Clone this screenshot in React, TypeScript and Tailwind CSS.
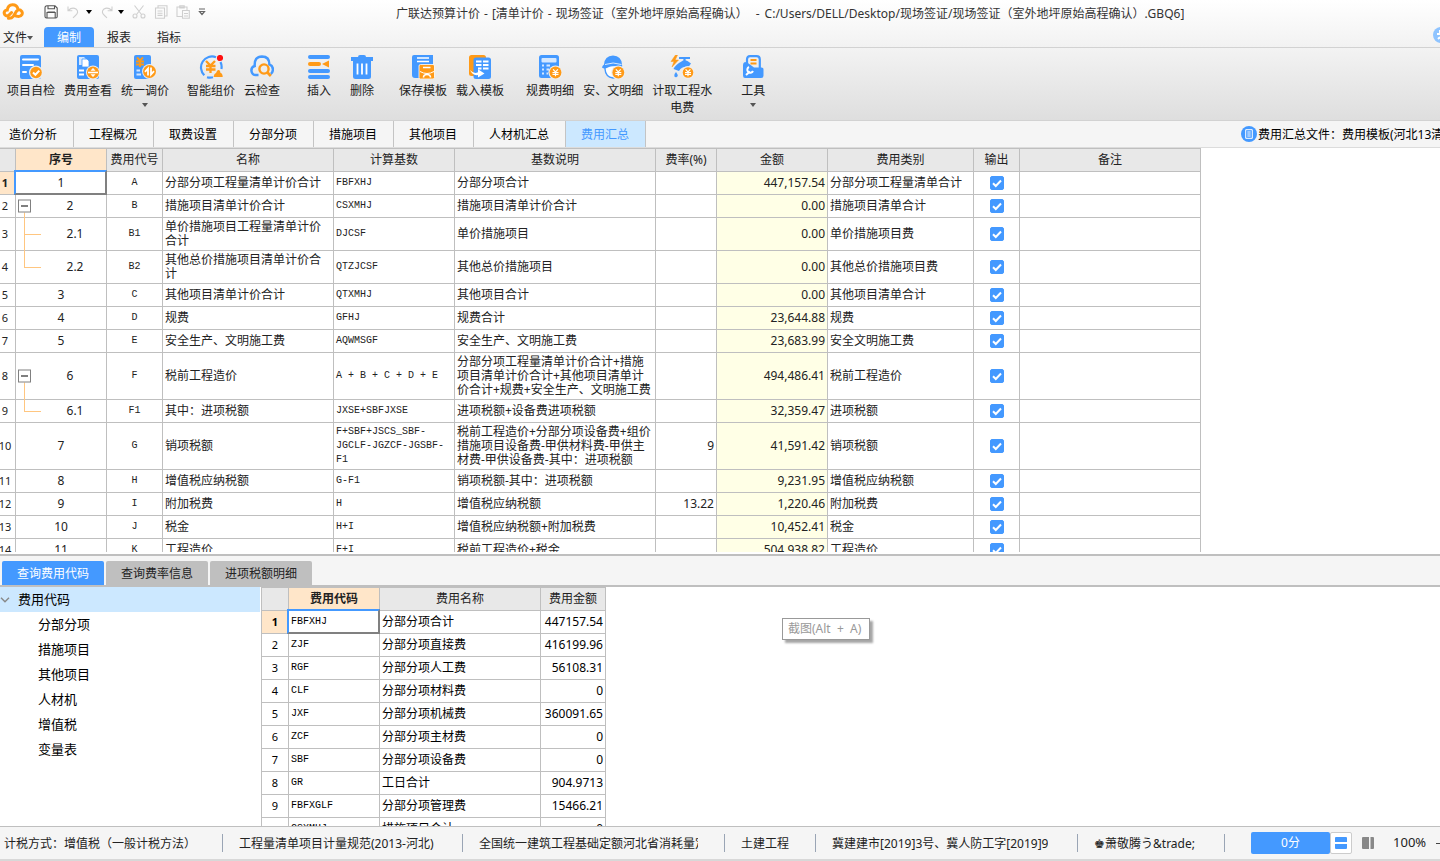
import type { ReactNode } from "react";

const BLUE = "#4499ff";
const ORANGE = "#ff9a17";

/* ---------- ribbon drawings ---------- */

function Glyph({ children }: { children: ReactNode }) {
  return (
    <svg viewBox="0 0 24 24" className="h-6 w-6 shrink-0" fill="none" aria-hidden="true">
      {children}
    </svg>
  );
}

function YenCoin({ x, y, r }: { x: number; y: number; r: number }) {
  return (
    <g>
      <circle cx={x} cy={y} r={r + 1.2} fill="#eeeeee" />
      <circle cx={x} cy={y} r={r} fill={ORANGE} />
      <path
        d={`M${x - 2.4} ${y - 3.2}L${x} ${y - 0.6}L${x + 2.4} ${y - 3.2}M${x - 3} ${y}H${x + 3}M${x - 3} ${y + 1.9}H${x + 3}M${x} ${y - 0.6}V${y + 3.8}`}
        stroke="#fff"
        strokeWidth="1.2"
      />
    </g>
  );
}

const CheckDoc = () => (
  <Glyph>
    <rect x="1" width="21" height="24" rx="2" fill={BLUE} />
    <path d="M4 4.5H19M4 10H14M4 17H7" stroke="#fff" strokeWidth="2" strokeLinecap="round" />
    <circle cx="17" cy="17.5" r="7" fill="#eee" />
    <circle cx="17" cy="17.5" r="5.8" fill={ORANGE} />
    <path d="M14 17.5L16.4 19.8L20.3 15.6" stroke="#fff" strokeWidth="2" />
  </Glyph>
);

const FeeView = () => (
  <Glyph>
    <rect x="1" width="22" height="24" rx="2" fill={BLUE} />
    <path d="M3 2H8L10 4V10H3Z" fill="#d5e8ff" />
    <path d="M6 4H11L13 6V12H6Z" fill="#fff" stroke={BLUE} strokeWidth=".8" />
    <path d="M3 15.5H8M3 19.5H8" stroke="#fff" strokeWidth="2" />
    <circle cx="17" cy="17.5" r="7" fill="#eee" />
    <circle cx="17" cy="17.5" r="6" fill={ORANGE} />
    <path d="M12 17.5H22" stroke="#fff" strokeWidth="1.6" />
    <path d="M15 15.5L17 13.2L19 15.5ZM15 19.5L17 21.8L19 19.5Z" fill="#fff" stroke="#fff" strokeWidth=".5" />
  </Glyph>
);

const PriceAdjust = () => (
  <Glyph>
    <rect x="1" width="17" height="24" rx="2" fill={BLUE} />
    <path d="M4 2.5L7 5.5L10 2.5M3 6.5H11M3 9.5H11M7 5.5V12" stroke={ORANGE} strokeWidth="1.9" />
    <path d="M3.5 15.5H7M3.5 19.5H8" stroke="#d5e8ff" strokeWidth="2" />
    <circle cx="16.5" cy="16.5" r="7.4" fill="#eee" />
    <circle cx="16.5" cy="16.5" r="6.5" fill={ORANGE} />
    <path d="M15 20.5V13.5L12 16.8M18 12.5V19.5L21 16.2" stroke="#fff" strokeWidth="1.8" />
  </Glyph>
);

const SmartPrice = () => (
  <Glyph>
    <path d="M17 2.2A11 11 0 0 0 5.3 20.3M8 22.2A11 11 0 0 0 14 22.3M21.5 7A11 11 0 0 1 22.4 14" stroke={BLUE} strokeWidth="2.2" />
    <path d="M7 6L11.5 10.5L16 6M7 11H16.5M7 14.5H16.5M11.5 10.5V18" stroke={ORANGE} strokeWidth="2.3" />
    <path d="M14.5 22Q15 18.5 17.2 17.7Q18 14.5 19.8 15Q21.4 15.2 21.4 17.8Q23.7 18.6 23.7 22Z" fill={ORANGE} />
    <circle cx="21" cy="3" r="3.1" fill="#ff1010" />
  </Glyph>
);

const CloudCheck = () => (
  <Glyph>
    <path d="M8.5 20H6A4.6 4.6 0 0 1 4.7 11Q4.2 1.5 12 1.4Q19.4 1.5 19.4 9.4Q23.2 10.8 22.9 15Q22.5 18 20.8 19" stroke={BLUE} strokeWidth="2.5" />
    <circle cx="14" cy="14" r="4.6" stroke={ORANGE} strokeWidth="2.4" />
    <path d="M17.5 17.5L20.8 21" stroke={ORANGE} strokeWidth="2.6" />
  </Glyph>
);

const InsertRows = () => (
  <Glyph>
    <path d="M3 2H21M3 16H21M3 22H21" stroke={BLUE} strokeWidth="4" strokeLinecap="round" />
    <path d="M3 9H12" stroke={ORANGE} strokeWidth="4" strokeLinecap="round" />
    <path d="M15 9L22 5.5V12.5Z" fill={ORANGE} />
  </Glyph>
);

const Trash = () => (
  <Glyph>
    <path d="M8 2Q8 0 10 0H14Q16 0 16 2H23V6H1V2Z" fill={BLUE} />
    <path d="M3 5H21V21.5Q21 24 18.5 24H5.5Q3 24 3 21.5Z" fill={BLUE} />
    <path d="M7.5 8.5V19.5M12 8.5V19.5M16.5 8.5V19.5" stroke="#fff" strokeWidth="1.8" />
  </Glyph>
);

const SaveTemplate = () => (
  <Glyph>
    <path d="M3 0H22V12H8V23H4Q1 23 1 20V2Q1 0 3 0Z" fill={BLUE} />
    <path d="M6 3H18M6 6.5H18" stroke="#fff" strokeWidth="1.7" />
    <rect x="8" y="9.5" width="15.5" height="14.5" rx="1.5" fill={ORANGE} stroke="#fff" strokeWidth=".8" />
    <path d="M12 12.5H19.5M12.5 22.5Q12.5 19.5 16 19.5Q19.5 19.5 19.5 22.5" stroke="#fff" strokeWidth="1.6" />
    <path d="M9 16.5Q16 20.5 23 16.5" stroke="#fff" strokeWidth="1" />
  </Glyph>
);

const LoadTemplate = () => (
  <Glyph>
    <rect x="1" width="17" height="21" rx="2.5" fill={ORANGE} />
    <rect x="5.5" y="2.5" width="17.5" height="21.5" rx="2.5" fill={BLUE} />
    <path d="M8 6.5H13.5M15 6.5H20.5M8 10H13.5M15 10H20.5M10 13.5H13.5M15 13.5H20.5" stroke="#fff" strokeWidth="2" />
    <path d="M2 15Q6 19.5 10 17.3V14.3L16.5 18.5L10 22.5V20Q4.5 21 2 15Z" fill="#fff" />
  </Glyph>
);

const FeeDetail = () => (
  <Glyph>
    <rect x="1" width="20" height="23" rx="2.5" fill={BLUE} />
    <rect x="3.5" y="3" width="15" height="4.5" rx="1" fill="#d5e8ff" />
    <path d="M4 10.5H6M8.5 10.5H12M4 14.5H6M8.5 14.5H11M4 18.5H6M8.5 18.5H10" stroke="#d5e8ff" strokeWidth="2" />
    <YenCoin x={17.5} y={17.5} r={5.9} />
  </Glyph>
);

const SafetyDetail = () => (
  <Glyph>
    <path d="M4 11V14Q4.5 22 12 23Q20 22 20 12V10Z" fill="#fff" stroke={BLUE} strokeWidth="1.4" />
    <path d="M3 9.5Q3.5 1 12 .5Q20.5 1 21 9.5Q22 11 20 13Q12 9 7 12.5Q3 14.5 1 12.5Q1.4 10.5 3 9.5Z" fill={BLUE} />
    <path d="M4 9.5Q12 6.5 20.5 9.5" stroke="#fff" strokeWidth=".8" />
    <YenCoin x={17.3} y={17.5} r={5.9} />
  </Glyph>
);

const WaterPower = () => (
  <Glyph>
    <path d="M5.5 0L1 6.5H4L2 12L8.5 5H5.2L7.5 0Z" fill={ORANGE} stroke={ORANGE} strokeWidth=".5" />
    <path d="M9 3H20M14.5 3V6" stroke={BLUE} strokeWidth="2.2" />
    <path d="M11.5 6.5Q14 4.5 17.5 6L21 8.5L18.5 12Q12 11 9 16L3.5 14Q6 9 11.5 6.5Z" fill={BLUE} />
    <path d="M6 17Q3.6 19.5 4.3 21.2Q5 22.4 6.3 22.2Q8.2 21.6 7.8 20Z" fill={BLUE} />
    <YenCoin x={18} y={17.5} r={5.3} />
  </Glyph>
);

const Toolbox = () => (
  <Glyph>
    <path d="M6 10V4.5Q6 1.2 9 1.2H15.5Q18.8 1.2 18.8 4.5V13" stroke={BLUE} strokeWidth="2.2" />
    <path d="M9.5 5H15.5M9.5 8.5H15.5" stroke={ORANGE} strokeWidth="2" />
    <path d="M4 7Q6.5 7.2 9 9.5L13 12.5H20.5Q22.5 12.5 22.5 14.5V20.5Q22.5 23 20 23H4Q2 23 2 20.5V10Q2 7.5 4 7Z" fill={BLUE} />
    <path d="M5 20L9 16.5M8 12A3 3 0 1 0 12 16" stroke="#fff" strokeWidth="2" />
  </Glyph>
);

const Caret = ({ className = "" }: { className?: string }) => (
  <svg viewBox="0 0 6 4" className={`h-1 w-1.5 shrink-0 ${className}`} aria-hidden="true">
    <path d="M0 0H6L3 4Z" fill="currentColor" />
  </svg>
);

type Tool = { label: string; icon: () => ReactNode; menu?: boolean };

const toolGroups: { spacing: string; tools: Tool[] }[] = [
  {
    spacing: "ml-[3px]",
    tools: [
      { label: "项目自检", icon: CheckDoc },
      { label: "费用查看", icon: FeeView },
      { label: "统一调价", icon: PriceAdjust, menu: true },
    ],
  },
  {
    spacing: "ml-2.5",
    tools: [
      { label: "智能组价", icon: SmartPrice },
      { label: "云检查", icon: CloudCheck },
    ],
  },
  {
    spacing: "ml-3.5",
    tools: [
      { label: "插入", icon: InsertRows },
      { label: "删除", icon: Trash },
    ],
  },
  {
    spacing: "ml-3",
    tools: [
      { label: "保存模板", icon: SaveTemplate },
      { label: "载入模板", icon: LoadTemplate },
    ],
  },
  {
    spacing: "ml-3.5",
    tools: [
      { label: "规费明细", icon: FeeDetail },
      { label: "安、文明细", icon: SafetyDetail },
      { label: "计取工程水\n电费", icon: WaterPower },
    ],
  },
  { spacing: "ml-4", tools: [{ label: "工具", icon: Toolbox, menu: true }] },
];

/* ---------- title bar ---------- */

function QuickIcon({ label, muted, children }: { label: string; muted?: boolean; children: ReactNode }) {
  return (
    <button type="button" aria-label={label} className={muted ? "text-[#cfcfcf]" : "text-[#555]"}>
      <svg viewBox="0 0 14 14" className="h-3.5 w-3.5" fill="none" stroke="currentColor" strokeWidth="1.1">
        {children}
      </svg>
    </button>
  );
}

function TitleBar() {
  return (
    <div className="flex h-[27px] shrink-0 items-center">
      <div className="flex w-[396px] shrink-0 items-center pb-1 pl-0.5">
        <svg viewBox="0 0 22 18" className="h-[18px] w-[22px] shrink-0" fill="none" aria-hidden="true">
          <path
            d="M9.5 9.5L6.8 12.3Q4.6 13.6 3 12Q1.2 9.6 3.3 7.6Q4.4 6.8 5.3 6.9Q6 2 10.5 1.7Q14.7 1.6 15.8 5.5M6.5 15.3Q9.5 15.6 11.3 13.3L14.5 8.2Q16.3 6.1 18.6 7.2Q21 8.8 20 11.4Q18.5 14 15.5 13.4L14 13"
            stroke={ORANGE}
            strokeWidth="3"
            strokeLinecap="round"
          />
        </svg>
        <div className="flex items-center pl-5">
          <QuickIcon label="保存">
            <path d="M1 3Q1 .8 3 .8H11L13.2 3V11.5Q13.2 13 11.7 13H2.5Q1 13 1 11.5ZM4 1V3.8H10.5V1M3 13V7.5H11.2V13M3.5 7H11" />
          </QuickIcon>
          <span className="w-2" />
          <QuickIcon label="撤销" muted>
            <path d="M2 1.5V5.8H6.3M2.3 5.5Q6 1.8 10 4Q13.5 7 9.5 10.5L7 12.8" />
          </QuickIcon>
          <Caret className="ml-1.5 text-black" />
          <span className="w-2" />
          <QuickIcon label="恢复" muted>
            <path d="M12 1.5V5.8H7.7M11.7 5.5Q8 1.8 4 4Q.5 7 4.5 10.5L7 12.8" />
          </QuickIcon>
          <Caret className="ml-1 text-black" />
          <span className="w-2" />
          <QuickIcon label="剪切" muted>
            <path d="M2.5 .5L9.5 9.5M11.5 .5L4.5 9.5" />
            <circle cx="3" cy="11" r="2" />
            <circle cx="11" cy="11" r="2" />
          </QuickIcon>
          <span className="w-2" />
          <QuickIcon label="复制" muted>
            <path d="M4 3V.8H13V11H11M1.5 3H10.5V13.2H1.5ZM3.5 6H8.5M3.5 8.2H8.5M3.5 10.4H8.5" />
          </QuickIcon>
          <span className="w-2" />
          <QuickIcon label="粘贴" muted>
            <path d="M6 11.5H1V2H11V5M3.8 2V.7H8.2V3H3.8V2M6.5 5.5H13.3V13.3H6.5ZM8 8.5H12M8 11H12" />
          </QuickIcon>
          <span className="w-2" />
          <button type="button" aria-label="自定义快速访问工具栏" className="text-[#666]">
            <svg viewBox="0 0 8 8" className="h-2 w-2" fill="none" stroke="currentColor" strokeWidth="1.2">
              <path d="M1 1H7M1.5 3.5L4 6.5L6.5 3.5Z" />
            </svg>
          </button>
        </div>
      </div>
      <h1 className="flex gap-1 overflow-hidden text-xs whitespace-nowrap text-[#333]">
        <span>广联达预算计价</span>
        <span>-</span>
        <span>[清单计价</span>
        <span>-</span>
        <span>现场签证（室外地坪原始高程确认）</span>
        <span className="ml-1">-</span>
        <span className="ml-px">C:/Users/DELL/Desktop/现场签证/现场签证（室外地坪原始高程确认）.GBQ6]</span>
      </h1>
    </div>
  );
}

function MenuBar() {
  return (
    <nav className="flex h-5 shrink-0 items-stretch overflow-hidden text-xs text-[#222]">
      <button type="button" className="flex w-11 items-center pt-0.5 pl-[3px]">
        文件
        <Caret className="text-[#555]" />
      </button>
      <button type="button" className="w-[50px] rounded-t-sm bg-[#4499ff] pt-0.5 text-white">
        编制
      </button>
      <button type="button" className="w-[50px] pt-0.5">
        报表
      </button>
      <button type="button" className="w-[50px] pt-0.5">
        指标
      </button>
      <span className="-mr-[9px] ml-auto flex h-4 w-4 items-center justify-center rounded-full bg-[#8fc4ff]">
        <svg viewBox="0 0 16 16" className="h-4 w-4" fill="none" stroke="#fff" strokeWidth="2" aria-hidden="true">
          <path d="M4 7H9M7 3V7M5 12Q8 9 11 12" />
        </svg>
      </span>
    </nav>
  );
}

function Ribbon() {
  return (
    <div className="flex h-[74px] shrink-0 items-start overflow-hidden border-y border-[#d2d2d2] bg-linear-to-b from-[#f3f3f3] to-[#dedede] pt-[7px]">
      {toolGroups.map((group, i) => (
        <div key={i} className={`flex shrink-0 items-start gap-px ${group.spacing}`}>
          {group.tools.map(({ label, icon: Icon, menu }) => (
            <button
              key={label}
              type="button"
              className="flex min-w-[42px] flex-col items-center px-1 text-xs leading-[17px] whitespace-pre-line text-[#222]"
            >
              <Icon />
              <span className="mt-[3px]">{label}</span>
              {menu && <Caret className="mt-1 text-[#555]" />}
            </button>
          ))}
        </div>
      ))}
    </div>
  );
}

const pageTabs = ["造价分析", "工程概况", "取费设置", "分部分项", "措施项目", "其他项目", "人材机汇总", "费用汇总"];

function PageTabs() {
  return (
    <div className="flex h-[27px] shrink-0 border-b border-[#dcdcdc] bg-[#f5f5f5] text-xs text-black">
      {pageTabs.map((name, i) => (
        <button
          key={name}
          type="button"
          className={`shrink-0 border-r border-[#c4c4c4] pt-0.5 pr-4 ${i === 0 ? "pl-[9px]" : "pl-[15px]"} ${
            name === "费用汇总" ? "bg-[#cce8ff] text-[#4499ff]" : ""
          }`}
        >
          {name}
        </button>
      ))}
      <div className="ml-auto flex w-[199px] items-center overflow-hidden whitespace-nowrap">
        <svg viewBox="0 0 16 16" className="mr-px h-4 w-4 shrink-0" fill="none" aria-hidden="true">
          <circle cx="8" cy="8" r="8" fill={BLUE} />
          <path d="M4.7 3.7H11.3V12.3H4.7ZM6.3 6H9.7M6.3 8H9.7M6.3 10H9.7" stroke="#fff" />
        </svg>
        <span className="pt-0.5">费用汇总文件：费用模板(河北13清</span>
      </div>
    </div>
  );
}

/* ---------- summary table ---------- */

type Kind = "flat" | "parent" | "child" | "last";
type SummaryRow = [seq: string, kind: Kind, code: string, name: string, base: string, note: string, rate: string, amount: string, category: string];

const summaryRows: SummaryRow[] = [
  ["1", "flat", "A", "分部分项工程量清单计价合计", "FBFXHJ", "分部分项合计", "", "447,157.54", "分部分项工程量清单合计"],
  ["2", "parent", "B", "措施项目清单计价合计", "CSXMHJ", "措施项目清单计价合计", "", "0.00", "措施项目清单合计"],
  ["2.1", "child", "B1", "单价措施项目工程量清单计价\n合计", "DJCSF", "单价措施项目", "", "0.00", "单价措施项目费"],
  ["2.2", "last", "B2", "其他总价措施项目清单计价合\n计", "QTZJCSF", "其他总价措施项目", "", "0.00", "其他总价措施项目费"],
  ["3", "flat", "C", "其他项目清单计价合计", "QTXMHJ", "其他项目合计", "", "0.00", "其他项目清单合计"],
  ["4", "flat", "D", "规费", "GFHJ", "规费合计", "", "23,644.88", "规费"],
  ["5", "flat", "E", "安全生产、文明施工费", "AQWMSGF", "安全生产、文明施工费", "", "23,683.99", "安全文明施工费"],
  ["6", "parent", "F", "税前工程造价", "A + B + C + D + E", "分部分项工程量清单计价合计+措施\n项目清单计价合计+其他项目清单计\n价合计+规费+安全生产、文明施工费", "", "494,486.41", "税前工程造价"],
  ["6.1", "last", "F1", "其中：进项税额", "JXSE+SBFJXSE", "进项税额+设备费进项税额", "", "32,359.47", "进项税额"],
  ["7", "flat", "G", "销项税额", "F+SBF+JSCS_SBF-\nJGCLF-JGZCF-JGSBF-\nF1", "税前工程造价+分部分项设备费+组价\n措施项目设备费-甲供材料费-甲供主\n材费-甲供设备费-其中：进项税额", "9", "41,591.42", "销项税额"],
  ["8", "flat", "H", "增值税应纳税额", "G-F1", "销项税额-其中：进项税额", "", "9,231.95", "增值税应纳税额"],
  ["9", "flat", "I", "附加税费", "H", "增值税应纳税额", "13.22", "1,220.46", "附加税费"],
  ["10", "flat", "J", "税金", "H+I", "增值税应纳税额+附加税费", "", "10,452.41", "税金"],
  ["11", "flat", "K", "工程造价", "F+I", "税前工程造价+税金", "", "504,938.82", "工程造价"],
];

const cell = "border-r border-b border-[#bfbfbf] px-0.5";
const headCell = "border-r border-b border-[#bfbfbf] bg-[#e8e8e8] p-0 font-normal whitespace-nowrap";
const mono = "font-['Liberation_Mono','Noto_Sans_CJK_SC',monospace] text-[10px]";

const Selection = () => (
  <span className="pointer-events-none absolute -top-0.5 -right-px -bottom-px -left-0.5 z-10 border-2 border-t-[#4499ff] border-r-[#808080] border-b-[#808080] border-l-[#4499ff]" />
);

function Branch({ kind }: { kind: Kind }) {
  if (kind === "flat") return null;
  if (kind === "parent")
    return (
      <>
        <span className="absolute top-1/2 -bottom-px left-2 w-px bg-[#ffc680]" />
        <button
          type="button"
          aria-label="折叠"
          className="absolute top-1/2 left-0.5 flex h-[13px] w-[13px] -translate-y-1/2 items-center justify-center border border-[#808080] bg-white"
        >
          <span className="h-px w-[7px] bg-black" />
        </button>
      </>
    );
  return (
    <>
      <span className={`absolute top-0 left-2 w-px bg-[#ffc680] ${kind === "child" ? "-bottom-px" : "bottom-1/2"}`} />
      <span className="absolute top-1/2 left-2 h-px w-[17px] bg-[#ffc680]" />
    </>
  );
}

const seqIndent: Record<Kind, string> = { flat: "", parent: "pl-[18px]", child: "pl-7", last: "pl-7" };

function SummaryTable() {
  return (
    <div className="min-h-0 flex-1 overflow-hidden pb-0.5">
      <div className="h-full overflow-hidden">
        <table className="w-[1201px] table-fixed border-separate border-spacing-0 border-t border-[#bfbfbf] text-xs leading-[14px] text-[#222]">
          <colgroup>
            <col className="w-4" />
            <col className="w-[91px]" />
            <col className="w-14" />
            <col className="w-[171px]" />
            <col className="w-[121px]" />
            <col className="w-[201px]" />
            <col className="w-[61px]" />
            <col className="w-[111px]" />
            <col className="w-[146px]" />
            <col className="w-[46px]" />
            <col className="w-[181px]" />
          </colgroup>
          <thead>
            <tr className="h-[23px]">
              <th className={headCell} />
              <th className="border-r border-b border-[#bfbfbf] bg-[#ffe6c9] p-0 font-bold">序号</th>
              {["费用代号", "名称", "计算基数", "基数说明", "费率(%)", "金额", "费用类别", "输出", "备注"].map((h) => (
                <th key={h} className={headCell}>
                  {h}
                </th>
              ))}
            </tr>
          </thead>
          <tbody>
            {summaryRows.map(([seq, kind, code, name, base, note, rate, amount, category], i) => {
              const lines = Math.max(name.split("\n").length, note.split("\n").length);
              const height = lines === 3 ? "h-[47px]" : lines === 2 ? "h-[33px]" : "h-[23px]";
              return (
                <tr key={seq} className={height}>
                  <td className={`border-r border-b border-[#bfbfbf] p-0 pr-[5px] text-[11px] ${i === 0 ? "bg-[#ffe6c9] font-bold" : ""}`}>
                    <span className="flex justify-center">{i + 1}</span>
                  </td>
                  <td className={`relative border-r border-b border-[#bfbfbf] p-0 text-center ${seqIndent[kind]}`}>
                    <Branch kind={kind} />
                    {seq}
                    {i === 0 && <Selection />}
                  </td>
                  <td className={`${cell} text-center ${mono}`}>{code}</td>
                  <td className={`${cell} whitespace-pre`}>{name}</td>
                  <td className={`${cell} whitespace-pre ${mono}`}>{base}</td>
                  <td className={`${cell} whitespace-pre`}>{note}</td>
                  <td className={`${cell} text-right`}>{rate}</td>
                  <td className={`${cell} bg-[#ffffe6] text-right`}>{amount}</td>
                  <td className={`${cell} whitespace-nowrap`}>{category}</td>
                  <td className={cell}>
                    <label className="relative mx-auto block h-3.5 w-3.5">
                      <input
                        type="checkbox"
                        defaultChecked
                        aria-label={`输出 ${seq}`}
                        className="peer block h-3.5 w-3.5 appearance-none rounded-xs border border-[#4499ff] bg-white checked:bg-[#4499ff]"
                      />
                      <svg viewBox="0 0 14 14" className="pointer-events-none absolute inset-0 hidden h-3.5 w-3.5 peer-checked:block" fill="none">
                        <path d="M3 7.2L5.8 10L11 4.5" stroke="#fff" strokeWidth="2" />
                      </svg>
                    </label>
                  </td>
                  <td className={cell} />
                </tr>
              );
            })}
          </tbody>
        </table>
      </div>
    </div>
  );
}

/* ---------- lookup panel ---------- */

const feeRows: [code: string, name: string, amount: string][] = [
  ["FBFXHJ", "分部分项合计", "447157.54"],
  ["ZJF", "分部分项直接费", "416199.96"],
  ["RGF", "分部分项人工费", "56108.31"],
  ["CLF", "分部分项材料费", "0"],
  ["JXF", "分部分项机械费", "360091.65"],
  ["ZCF", "分部分项主材费", "0"],
  ["SBF", "分部分项设备费", "0"],
  ["GR", "工日合计", "904.9713"],
  ["FBFXGLF", "分部分项管理费", "15466.21"],
  ["CSXMHJ", "措施项目合计", "0"],
];

function FeeTable() {
  return (
    <div className="h-full overflow-hidden">
      <table className="w-[345px] table-fixed border-separate border-spacing-0 border-t border-l border-[#bfbfbf] text-xs leading-[14px] text-black">
        <colgroup>
          <col className="w-[27px]" />
          <col className="w-[91px]" />
          <col className="w-[161px]" />
          <col className="w-[65px]" />
        </colgroup>
        <thead>
          <tr className="h-[23px] text-[#222]">
            <th className={headCell} />
            <th className="border-r border-b border-[#bfbfbf] bg-[#ffe6c9] p-0 font-bold">费用代码</th>
            <th className={headCell}>费用名称</th>
            <th className={headCell}>费用金额</th>
          </tr>
        </thead>
        <tbody>
          {feeRows.map(([code, name, amount], i) => (
            <tr key={code} className="h-[23px]">
              <td className={`${cell} text-center text-[11px] ${i === 0 ? "bg-[#ffe6c9] font-bold" : ""}`}>
                {i < 9 ? i + 1 : null}
              </td>
              <td className={`${cell} relative ${mono}`}>
                {code}
                {i === 0 && <Selection />}
              </td>
              <td className={cell}>{name}</td>
              <td className={`${cell} text-right`}>{amount}</td>
            </tr>
          ))}
        </tbody>
      </table>
    </div>
  );
}

function LookupPanel() {
  return (
    <section className="flex h-[272px] shrink-0 flex-col border-t-2 border-[#bfbfbf]">
      <div className="flex h-[31px] shrink-0 items-end gap-0.5 border-b-2 border-[#bfbfbf] bg-[#f5f5f5] pl-0.5 text-xs">
        <button type="button" className="h-6 w-[102px] rounded-t-xs bg-[#4499ff] pt-0.5 text-white">
          查询费用代码
        </button>
        <button type="button" className="h-6 w-[102px] rounded-t-xs bg-[#bfbfbf] pt-0.5 text-[#222]">
          查询费率信息
        </button>
        <button type="button" className="h-6 w-[102px] rounded-t-xs bg-[#bfbfbf] pt-0.5 text-[#222]">
          进项税额明细
        </button>
      </div>
      <div className="flex min-h-0 flex-1">
        <ul className="w-[261px] shrink-0 pr-px text-[13px] leading-[25px] text-black">
          <li>
            <div className="flex items-center bg-[#cce8ff]">
              <svg viewBox="0 0 10 6" className="mr-2 h-1.5 w-2.5" fill="none" stroke="#888" strokeWidth="1.4" aria-hidden="true">
                <path d="M1 .8L5 4.8L9 .8" />
              </svg>
              费用代码
            </div>
            <ul>
              {["分部分项", "措施项目", "其他项目", "人材机", "增值税", "变量表"].map((n) => (
                <li key={n} className="pl-[38px]">
                  {n}
                </li>
              ))}
            </ul>
          </li>
        </ul>
        <div className="relative min-w-0 flex-1">
          <FeeTable />
          <div
            role="tooltip"
            className="absolute top-[31px] left-[521px] border border-[#999] bg-white pr-2 pl-[5px] text-xs leading-5 whitespace-nowrap text-[#999] shadow-[3px_3px_2px_rgba(0,0,0,0.35)]"
          >
            截图(Alt&nbsp; +&nbsp; A)
          </div>
        </div>
      </div>
    </section>
  );
}

/* ---------- status bar ---------- */

const statusItems: [text: string, width: string][] = [
  ["计税方式：增值税（一般计税方法）", "pl-1"],
  ["工程量清单项目计量规范(2013-河北)", "min-w-[240px] pl-4"],
  ["全国统一建筑工程基础定额河北省消耗量定", "pl-4"],
  ["土建工程", "pl-4"],
  ["冀建建市[2019]3号、冀人防工字[2019]9", "min-w-[262px] pl-4"],
  ["♚萧敬腾う&trade;", "min-w-[147px] pl-4"],
];

function StatusBar() {
  return (
    <footer className="flex h-[35px] shrink-0 items-center overflow-hidden border-t border-b-2 border-t-[#bfbfbf] border-b-[#d8d8d8] bg-[#f5f5f5] text-xs text-[#222]">
      {statusItems.map(([text, width]) => (
        <div key={text} className={`flex h-[18px] shrink-0 items-center border-r border-[#9aa5b5] pr-[26px] ${width}`}>
          <span className="max-w-[219px] overflow-hidden pt-0.5 whitespace-nowrap">{text}</span>
        </div>
      ))}
      <button type="button" className="ml-[26px] h-[22px] w-[79px] shrink-0 rounded-xs bg-[#4499ff] text-white">
        0分
      </button>
      <button type="button" aria-label="上下布局" className="flex h-[22px] w-[22px] shrink-0 items-center justify-center rounded-xs border border-[#ccc] bg-white">
        <svg viewBox="0 0 12 12" className="h-3 w-3" fill={BLUE}>
          <path d="M1 0H11Q12 0 12 1V5H0V1Q0 0 1 0ZM0 7H12V11Q12 12 11 12H1Q0 12 0 11Z" />
        </svg>
      </button>
      <button type="button" aria-label="左右布局" className="ml-2.5 shrink-0">
        <svg viewBox="0 0 12 12" className="h-3 w-3" fill="#888">
          <path d="M1 0H7V12H1Q0 12 0 11V1Q0 0 1 0ZM8.5 0H11Q12 0 12 1V11Q12 12 11 12H8.5Z" />
        </svg>
      </button>
      <span className="ml-[19px] shrink-0 text-[13px]">100%</span>
      <button type="button" aria-label="缩小" className="ml-2.5 h-px w-2 shrink-0 bg-[#444]" />
    </footer>
  );
}

export default function App() {
  return (
    <div className="flex h-screen flex-col overflow-hidden bg-white font-['Noto_Sans','Noto_Sans_CJK_SC',sans-serif]">
      <header className="shrink-0 bg-linear-to-b from-white to-[#f2f2f2]">
        <TitleBar />
        <MenuBar />
      </header>
      <Ribbon />
      <PageTabs />
      <SummaryTable />
      <LookupPanel />
      <StatusBar />
    </div>
  );
}
